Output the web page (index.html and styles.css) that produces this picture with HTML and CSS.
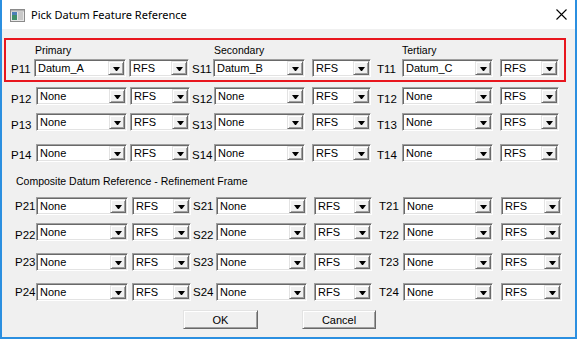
FILE: index.html
```html
<!DOCTYPE html>
<html lang="en">
<head>
  <meta charset="UTF-8">
  <link rel="stylesheet" href="styles.css">
</head>
<body>
  <div class="window">
    <div class="titlebar">
      <svg class="app-icon" width="15" height="13" viewBox="0 0 15 13">
        <rect x="0.5" y="0.5" width="14" height="12" fill="#e8e8e8" stroke="#8a8a8a"/>
        <rect x="2" y="3" width="5" height="8" fill="#3f8f6a"/>
        <rect x="2" y="3" width="5" height="3" fill="#4d7fb8"/>
        <rect x="8" y="3" width="5" height="8" fill="#c8c8c8"/>
        <rect x="1" y="1" width="13" height="1.5" fill="#b0b0b0"/>
      </svg>
      <span class="title">Pick Datum Feature Reference</span>
      <svg class="close" width="11" height="11" viewBox="0 0 11 11">
        <path d="M0.5 0.5 L10.5 10.5 M10.5 0.5 L0.5 10.5" stroke="#000" stroke-width="1.1" fill="none"/>
      </svg>
    </div>

    <div class="content">
      <div class="highlight">
        <div class="heads">
          <span class="h-p">Primary</span>
          <span class="h-s">Secondary</span>
          <span class="h-t">Tertiary</span>
        </div>
        <div class="row first drop1">
          <span class="lbl lp">P11</span>
          <div class="combo c1"><span>Datum_A</span><i></i></div>
          <div class="combo r1"><span>RFS</span><i></i></div>
          <span class="lbl ls">S11</span>
          <div class="combo c2"><span>Datum_B</span><i></i></div>
          <div class="combo r2"><span>RFS</span><i></i></div>
          <span class="lbl lt">T11</span>
          <div class="combo c3"><span>Datum_C</span><i></i></div>
          <div class="combo r3"><span>RFS</span><i></i></div>
        </div>
      </div>

      <div class="sec1">
        <div class="row p12 drop3">
          <span class="lbl lp">P12</span>
          <div class="combo c1"><span>None</span><i></i></div>
          <div class="combo r1"><span>RFS</span><i></i></div>
          <span class="lbl ls">S12</span>
          <div class="combo c2"><span>None</span><i></i></div>
          <div class="combo r2"><span>RFS</span><i></i></div>
          <span class="lbl lt">T12</span>
          <div class="combo c3"><span>None</span><i></i></div>
          <div class="combo r3"><span>RFS</span><i></i></div>
        </div>
        <div class="row p13 drop3">
          <span class="lbl lp">P13</span>
          <div class="combo c1"><span>None</span><i></i></div>
          <div class="combo r1"><span>RFS</span><i></i></div>
          <span class="lbl ls">S13</span>
          <div class="combo c2"><span>None</span><i></i></div>
          <div class="combo r2"><span>RFS</span><i></i></div>
          <span class="lbl lt">T13</span>
          <div class="combo c3"><span>None</span><i></i></div>
          <div class="combo r3"><span>RFS</span><i></i></div>
        </div>
        <div class="row p14 drop2">
          <span class="lbl lp">P14</span>
          <div class="combo c1"><span>None</span><i></i></div>
          <div class="combo r1"><span>RFS</span><i></i></div>
          <span class="lbl ls">S14</span>
          <div class="combo c2"><span>None</span><i></i></div>
          <div class="combo r2"><span>RFS</span><i></i></div>
          <span class="lbl lt">T14</span>
          <div class="combo c3"><span>None</span><i></i></div>
          <div class="combo r3"><span>RFS</span><i></i></div>
        </div>
      </div>

      <div class="caption">Composite Datum Reference - Refinement Frame</div>

      <div class="sec2">
        <div class="row p21">
          <span class="lbl lp">P21</span>
          <div class="combo c1"><span>None</span><i></i></div>
          <div class="combo r1"><span>RFS</span><i></i></div>
          <span class="lbl ls">S21</span>
          <div class="combo c2"><span>None</span><i></i></div>
          <div class="combo r2"><span>RFS</span><i></i></div>
          <span class="lbl lt">T21</span>
          <div class="combo c3"><span>None</span><i></i></div>
          <div class="combo r3"><span>RFS</span><i></i></div>
        </div>
        <div class="row p22 drop3">
          <span class="lbl lp">P22</span>
          <div class="combo c1"><span>None</span><i></i></div>
          <div class="combo r1"><span>RFS</span><i></i></div>
          <span class="lbl ls">S22</span>
          <div class="combo c2"><span>None</span><i></i></div>
          <div class="combo r2"><span>RFS</span><i></i></div>
          <span class="lbl lt">T22</span>
          <div class="combo c3"><span>None</span><i></i></div>
          <div class="combo r3"><span>RFS</span><i></i></div>
        </div>
        <div class="row p23">
          <span class="lbl lp">P23</span>
          <div class="combo c1"><span>None</span><i></i></div>
          <div class="combo r1"><span>RFS</span><i></i></div>
          <span class="lbl ls">S23</span>
          <div class="combo c2"><span>None</span><i></i></div>
          <div class="combo r2"><span>RFS</span><i></i></div>
          <span class="lbl lt">T23</span>
          <div class="combo c3"><span>None</span><i></i></div>
          <div class="combo r3"><span>RFS</span><i></i></div>
        </div>
        <div class="row p24">
          <span class="lbl lp">P24</span>
          <div class="combo c1"><span>None</span><i></i></div>
          <div class="combo r1"><span>RFS</span><i></i></div>
          <span class="lbl ls">S24</span>
          <div class="combo c2"><span>None</span><i></i></div>
          <div class="combo r2"><span>RFS</span><i></i></div>
          <span class="lbl lt">T24</span>
          <div class="combo c3"><span>None</span><i></i></div>
          <div class="combo r3"><span>RFS</span><i></i></div>
        </div>
      </div>

      <div class="buttons">
        <button class="btn ok">OK</button>
        <button class="btn cancel">Cancel</button>
      </div>
    </div>
  </div>
</body>
</html>
```

FILE: styles.css
```css
* { box-sizing: border-box; }
body { margin: 0; background: #fff; font-family: "Liberation Sans", Arial, sans-serif; color: #000; }

.window {
  width: 577px;
  height: 339px;
  border: 2px solid #2b8fe0;
  border-top: 0;
  background: #f0f0f0;
  display: flex;
  flex-direction: column;
}

/* title bar */
.titlebar { height: 29px; background: #fff; display: flex; align-items: center; }
.app-icon { margin-left: 8px; margin-top: 1px; }
.title { margin-left: 6px; font-family: "Noto Sans", sans-serif; font-size: 11px; }
.close { margin-left: auto; margin-right: 8px; margin-top: 0; }

.content { flex: 1; padding-top: 9px; }

/* red annotation frame */
.highlight { margin-left: 2px; width: 562px; border: 2px solid #e8161e; padding-bottom: 3px; }
.heads { height: 19px; padding-top: 3px; display: flex; font-size: 10.5px; line-height: 14px; }
.h-p { margin-left: 29px; width: 179px; }
.h-s { width: 188px; }

/* rows */
.row { display: flex; height: 18px; align-items: flex-start; }
.lbl { font-size: 11.5px; line-height: 18px; white-space: nowrap; }
.drop1 .lbl { padding-top: 1px; }
.drop2 .lbl { padding-top: 2px; }
.drop3 .lbl { padding-top: 3px; }

.first .lp { width: 28px; padding-left: 5px; }
.first .c1 { width: 92px; }
.first .r1 { width: 60px; margin-left: 3px; }
.first .ls { width: 24px; padding-left: 3px; }
.first .c2 { width: 92px; }
.first .r2 { width: 59px; margin-left: 7px; }
.first .lt { width: 31px; padding-left: 6px; }
.first .c3 { width: 91px; }
.first .r3 { width: 59px; margin-left: 7px; }

.sec1 .lp { width: 34px; padding-left: 9px; }
.sec1 .c1 { width: 91px; }
.sec1 .r1 { width: 60px; margin-left: 3px; }
.sec1 .ls { width: 24px; padding-left: 2px; }
.sec1 .c2 { width: 91px; }
.sec1 .r2 { width: 59px; margin-left: 7px; }
.sec1 .lt { width: 31px; padding-left: 6px; }
.sec1 .c3 { width: 91px; }
.sec1 .r3 { width: 59px; margin-left: 7px; }

.sec2 .lp { width: 34px; padding-left: 13px; }
.sec2 .c1 { width: 92px; }
.sec2 .r1 { width: 59px; margin-left: 4px; }
.sec2 .ls { width: 25px; padding-left: 2px; }
.sec2 .c2 { width: 91px; }
.sec2 .r2 { width: 58px; margin-left: 7px; }
.sec2 .lt { width: 31px; padding-left: 7px; }
.sec2 .c3 { width: 90px; }
.sec2 .r3 { width: 61px; margin-left: 8px; }

.p12 { margin-top: 5px; }
.p13 { margin-top: 8px; }
.p14 { margin-top: 13px; }
.caption { margin-top: 12px; margin-left: 14px; font-size: 10.5px; line-height: 14px; }
.p21 { margin-top: 9px; }
.p22 { margin-top: 8px; }
.p23 { margin-top: 12px; }
.p24 { margin-top: 12px; }

/* combo box */
.combo {
  height: 18px;
  background: #fff;
  border: 1px solid;
  border-color: #a0a0a0 #fff #fff #a0a0a0;
  box-shadow: inset 1px 1px 0 #696969, inset -1px -1px 0 #e3e3e3;
  display: flex;
  align-items: center;
  padding: 1px;
}
.combo span { flex: 1; padding-left: 2px; font-size: 11px; line-height: 14px; }
.combo i {
  width: 16px;
  height: 14px;
  background: #f0f0f0;
  border: 1px solid;
  border-color: #e3e3e3 #696969 #696969 #e3e3e3;
  box-shadow: inset 1px 1px 0 #fff, inset -1px -1px 0 #a0a0a0;
  display: flex;
  align-items: center;
  justify-content: center;
}
.combo i::after {
  content: "";
  width: 1px;
  height: 0;
  border-top: 4px solid #000;
  border-left: 3px solid transparent;
  border-right: 3px solid transparent;
  margin-top: 1px;
}

/* dialog buttons */
.buttons { display: flex; margin-top: 9px; padding-left: 181px; }
.btn {
  height: 19px;
  font-family: "Liberation Sans", Arial, sans-serif;
  font-size: 11px;
  background: #f0f0f0;
  border: 1px solid;
  border-color: #e3e3e3 #696969 #696969 #e3e3e3;
  box-shadow: inset 1px 1px 0 #fff, inset -1px -1px 0 #a0a0a0;
  padding: 0;
}
.ok { width: 75px; }
.cancel { width: 74px; margin-left: 44px; }
```
